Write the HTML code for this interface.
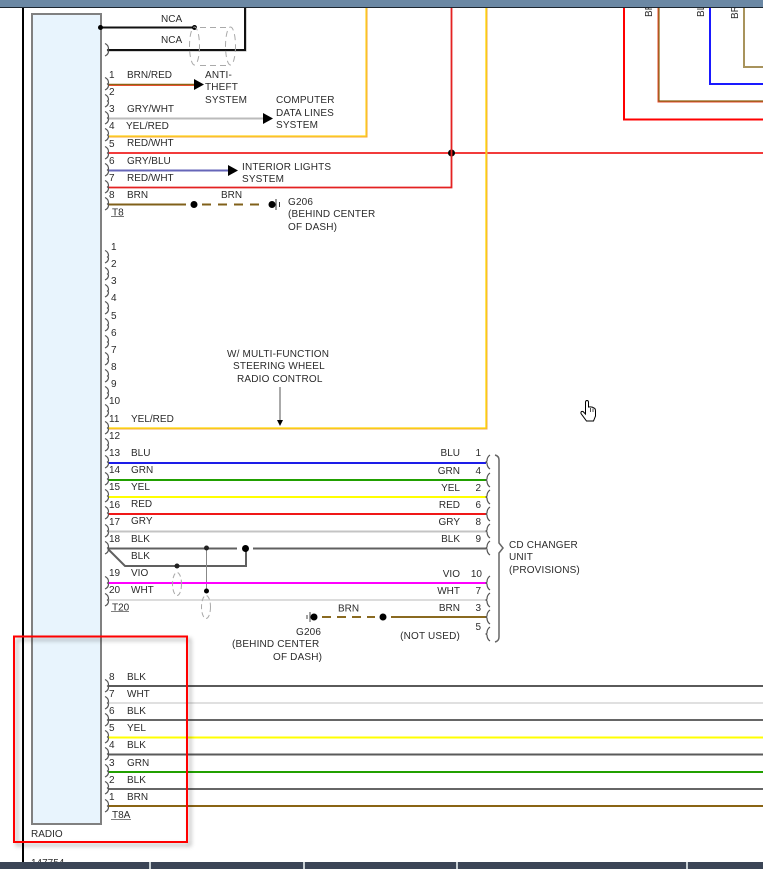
<!DOCTYPE html>
<html><head><meta charset="utf-8"><style>
html,body{margin:0;padding:0;background:#fff;width:763px;height:869px;overflow:hidden}
svg{display:block}
text{font-family:"Liberation Sans",sans-serif;font-size:10px;fill:#2b2b2b}
.n text{letter-spacing:.17px}
</style></head><body>
<svg width="763" height="869" viewBox="0 0 763 869" xmlns="http://www.w3.org/2000/svg">
<defs>
<path id="c" d="M0,-6.500Q3.500,-5 3.500,-1L2.500,0L3.500,1Q3.500,4.500 0,6" fill="none" stroke="#555" stroke-width="1.200"/>
<path id="r" d="M3,-7Q0,-5 0,-1L-1,0L0,1Q0,5 3,7" fill="none" stroke="#555" stroke-width="1.200"/>
<filter id="sh" x="-10%" y="-10%" width="125%" height="125%"><feDropShadow dx="3" dy="3" stdDeviation="2" flood-color="#000" flood-opacity=".35"/></filter>
</defs>

<!-- top-right nested wires -->
<g fill="none" stroke-width="2">
<path d="M624,8V119.500H763" stroke="#f00"/>
<path d="M658.500,8V101.500H763" stroke="#e8492f"/>
<path d="M659,8V101H763" stroke="#8a6414" stroke-width="1.200"/>
<path d="M710,8V84H763" stroke="#1a1aff"/>
<path d="M744,8V67H763" stroke="#a8935c"/>
</g>
<text transform="translate(652,17) rotate(-90)">BR</text>
<text transform="translate(704,17) rotate(-90)">BL</text>
<text transform="translate(738,19) rotate(-90)">BR</text>

<!-- frame -->
<rect x="22" y="8" width="2" height="855" fill="#000"/>
<rect x="32" y="14" width="69" height="810" fill="#e8f4fd" stroke="#808080" stroke-width="2"/>

<!-- upper wires -->
<path d="M100,27.500H194" stroke="#111" stroke-width="2"/>
<path d="M107,50.500H245.500V8" fill="none" stroke="#aaa" stroke-width="2"/>
<path d="M107,50H245V8" fill="none" stroke="#111" stroke-width="2"/>
<circle cx="100.500" cy="27.500" r="2.500" fill="#000"/><circle cx="194.500" cy="27.500" r="2.500" fill="#000"/>
<g fill="none" stroke="#aaa" stroke-width="1" stroke-dasharray="6 4">
<ellipse cx="194.500" cy="46" rx="5" ry="19"/><ellipse cx="230.500" cy="46" rx="5" ry="19"/>
<path d="M200,27.500H230M200,65.500H230"/>
</g>
<path d="M108,84.500H196" stroke="#8a6414" stroke-width="1.600"/><path d="M108,85.500H196" stroke="#e65030" stroke-width="1"/>
<path d="M194,79V90L204,84.500Z" fill="#000"/>
<path d="M108,118.500H263" stroke="#bbb" stroke-width="2"/><path d="M263,113V124L273,118.500Z" fill="#000"/>
<path d="M108,136.500H366.500V8" fill="none" stroke="#f4a73a" stroke-width="2"/><path d="M108,136H366V8" fill="none" stroke="#ffd21e" stroke-width="1.200"/>
<path d="M108,153H763" stroke="#f23b3b" stroke-width="2"/>
<circle cx="451.500" cy="153" r="3.500" fill="#000"/>
<path d="M108,170.500H229" stroke="#6666b8" stroke-width="2"/><path d="M228,165V176L238,170.500Z" fill="#000"/>
<path d="M108,187.500H451.500V8" fill="none" stroke="#e42222" stroke-width="1.800"/>
<path d="M108,204.500H186" stroke="#80601a" stroke-width="2"/>
<circle cx="194" cy="204.500" r="3.500" fill="#000"/>
<path d="M202,204.500H262" stroke="#80601a" stroke-width="2" stroke-dasharray="9 7"/>
<circle cx="272" cy="204.500" r="3.500" fill="#000"/>
<path d="M276,199V210M279.500,202V207" stroke="#333" stroke-width="1"/>

<!-- yellow long -->
<path d="M108,428.500H486.500V8" fill="none" stroke="#f0a850" stroke-width="2"/><path d="M108,428H486V8" fill="none" stroke="#ffd700" stroke-width="1.300"/>
<path d="M280,387V420" stroke="#555" stroke-width="1"/><path d="M277,420H283L280,426Z" fill="#000"/>

<!-- CD wires -->
<path d="M108,463H486" stroke="#1d1de8" stroke-width="2"/>
<path d="M108,480H486" stroke="#21a000" stroke-width="2"/>
<path d="M108,497H486" stroke="#ffff00" stroke-width="2"/>
<path d="M108,514H486" stroke="#f01818" stroke-width="2"/>
<path d="M108,531.500H486" stroke="#c4c4c4" stroke-width="2"/>
<path d="M108,548.500H237M253,548.500H486" stroke="#606060" stroke-width="2"/>
<path d="M108,549L125,566H246V548" fill="none" stroke="#606060" stroke-width="2"/>
<path d="M206.500,548V591" stroke="#888" stroke-width="1"/>
<circle cx="206.500" cy="548" r="2.500" fill="#222"/><circle cx="177" cy="566" r="2.500" fill="#222"/>
<circle cx="206.500" cy="591" r="2.500" fill="#000"/><circle cx="245.500" cy="548.500" r="3.500" fill="#000"/>
<path d="M108,583H486" stroke="#ff00ff" stroke-width="2"/>
<path d="M108,600H486" stroke="#dcdcdc" stroke-width="2"/>
<g fill="none" stroke="#aaa" stroke-width="1" stroke-dasharray="5 3">
<ellipse cx="177" cy="584" rx="4.500" ry="11.500"/><ellipse cx="206" cy="607" rx="4.500" ry="11.500"/>
</g>
<path d="M391,617H486" stroke="#8a6a20" stroke-width="2"/>
<circle cx="383" cy="617" r="3.500" fill="#000"/>
<path d="M322,617H375" stroke="#8a6a20" stroke-width="2" stroke-dasharray="9 6"/>
<circle cx="314" cy="617" r="3.500" fill="#000"/>
<path d="M310,612V622M307,615V619" stroke="#444" stroke-width="1"/>

<!-- bottom wires -->
<path d="M108,686H763" stroke="#5a5a5a" stroke-width="2"/>
<path d="M108,703H763" stroke="#e0e0e0" stroke-width="2"/>
<path d="M108,720H763" stroke="#666" stroke-width="2"/>
<path d="M108,737.500H763" stroke="#ffff00" stroke-width="2"/>
<path d="M108,754.500H763" stroke="#5a5a5a" stroke-width="2"/>
<path d="M108,772H763" stroke="#21a000" stroke-width="2"/>
<path d="M108,789H763" stroke="#666" stroke-width="2"/>
<path d="M108,806H763" stroke="#8a6414" stroke-width="2"/>

<!-- left connectors -->
<use href="#c" x="105" y="50"/><use href="#c" x="105" y="84"/><use href="#c" x="105" y="101"/><use href="#c" x="105" y="118"/><use href="#c" x="105" y="135"/><use href="#c" x="105" y="153"/><use href="#c" x="105" y="170"/><use href="#c" x="105" y="187"/><use href="#c" x="105" y="204"/>
<use href="#c" x="105" y="257"/><use href="#c" x="105" y="274"/><use href="#c" x="105" y="291"/><use href="#c" x="105" y="308"/><use href="#c" x="105" y="325"/><use href="#c" x="105" y="342"/><use href="#c" x="105" y="359"/><use href="#c" x="105" y="376"/><use href="#c" x="105" y="393"/><use href="#c" x="105" y="411"/><use href="#c" x="105" y="428"/>
<use href="#c" x="105" y="445"/><use href="#c" x="105" y="462"/><use href="#c" x="105" y="479"/><use href="#c" x="105" y="496"/><use href="#c" x="105" y="513"/><use href="#c" x="105" y="531"/><use href="#c" x="105" y="548"/><use href="#c" x="105" y="583"/><use href="#c" x="105" y="600"/>
<use href="#c" x="105" y="686"/><use href="#c" x="105" y="703"/><use href="#c" x="105" y="720"/><use href="#c" x="105" y="737"/><use href="#c" x="105" y="754"/><use href="#c" x="105" y="771"/><use href="#c" x="105" y="788"/><use href="#c" x="105" y="806"/>

<!-- right connectors -->
<use href="#r" x="487" y="462"/><use href="#r" x="487" y="480"/><use href="#r" x="487" y="497"/><use href="#r" x="487" y="514"/><use href="#r" x="487" y="531"/><use href="#r" x="487" y="548"/><use href="#r" x="487" y="583"/><use href="#r" x="487" y="600"/><use href="#r" x="487" y="617"/><use href="#r" x="487" y="634"/>
<path d="M495,455Q499,456 499,460V543L503,548L499,553V637Q499,641 495,642" fill="none" stroke="#666" stroke-width="1.500"/>

<!-- upper labels -->
<text x="161" y="22">NCA</text><text x="161" y="43">NCA</text>
<text x="109" y="78">1</text><text x="127" y="78">BRN/RED</text><text x="109" y="95">2</text>
<g class="n"><text x="205" y="78">ANTI-</text><text x="205" y="90">THEFT</text><text x="205" y="103">SYSTEM</text>
<text x="276" y="103">COMPUTER</text><text x="276" y="116">DATA LINES</text><text x="276" y="128">SYSTEM</text>
<text x="242" y="170">INTERIOR LIGHTS</text><text x="242" y="182">SYSTEM</text>
<text x="288" y="205">G206</text><text x="288" y="217">(BEHIND CENTER</text><text x="288" y="230">OF DASH)</text>
<text x="227" y="357">W/ MULTI-FUNCTION</text><text x="233" y="369">STEERING WHEEL</text><text x="237" y="382">RADIO CONTROL</text>
<text x="509" y="548">CD CHANGER</text><text x="509" y="560">UNIT</text><text x="509" y="573">(PROVISIONS)</text>
<text x="296" y="635">G206</text><text x="232" y="647">(BEHIND CENTER</text><text x="273" y="660">OF DASH)</text></g>
<text x="109" y="112">3</text><text x="127" y="112">GRY/WHT</text>
<text x="109" y="129">4</text><text x="126" y="129">YEL/RED</text>
<text x="109" y="147">5</text><text x="127" y="146">RED/WHT</text>
<text x="109" y="164">6</text><text x="127" y="164">GRY/BLU</text>
<text x="109" y="181">7</text><text x="127" y="181">RED/WHT</text>
<text x="109" y="198">8</text><text x="127" y="198">BRN</text><text x="221" y="198">BRN</text>
<text x="112" y="215.500">T8</text><path d="M111,216.500H124" stroke="#555" stroke-width=".8"/>

<!-- middle numbers -->
<text x="111" y="250">1</text><text x="111" y="267">2</text><text x="111" y="284">3</text><text x="111" y="301">4</text><text x="111" y="319">5</text><text x="111" y="336">6</text><text x="111" y="353">7</text><text x="111" y="370">8</text><text x="111" y="387">9</text><text x="109" y="404">10</text><text x="109" y="422">11</text>
<text x="131" y="422">YEL/RED</text>

<text x="109" y="439">12</text>
<text x="109" y="456">13</text><text x="131" y="456">BLU</text>
<text x="109" y="473">14</text><text x="131" y="473">GRN</text>
<text x="109" y="490">15</text><text x="131" y="490">YEL</text>
<text x="109" y="508">16</text><text x="131" y="507">RED</text>
<text x="109" y="525">17</text><text x="131" y="524">GRY</text>
<text x="109" y="542">18</text><text x="131" y="542">BLK</text>
<text x="131" y="559">BLK</text>
<text x="109" y="576">19</text><text x="131" y="576">VIO</text>
<text x="109" y="593">20</text><text x="131" y="593">WHT</text>
<text x="112" y="610.500">T20</text><path d="M111,611.500H129" stroke="#555" stroke-width=".8"/>

<!-- right labels -->
<g text-anchor="end">
<text x="460" y="456">BLU</text><text x="460" y="474">GRN</text><text x="460" y="491">YEL</text><text x="460" y="508">RED</text><text x="460" y="525">GRY</text><text x="460" y="542">BLK</text><text x="460" y="577">VIO</text><text x="460" y="594">WHT</text><text x="460" y="611">BRN</text>
<text x="481" y="456">1</text><text x="481" y="474">4</text><text x="481" y="491">2</text><text x="481" y="508">6</text><text x="481" y="525">8</text><text x="481" y="542">9</text><text x="482" y="577">10</text><text x="481" y="594">7</text><text x="481" y="611">3</text><text x="481" y="630">5</text>
<text x="460" y="639" letter-spacing=".17">(NOT USED)</text>
</g>
<text x="338" y="611.500">BRN</text>

<!-- bottom labels -->
<text x="109" y="680">8</text><text x="127" y="680">BLK</text>
<text x="109" y="697">7</text><text x="127" y="697">WHT</text>
<text x="109" y="714">6</text><text x="127" y="714">BLK</text>
<text x="109" y="731">5</text><text x="127" y="731">YEL</text>
<text x="109" y="748">4</text><text x="127" y="748">BLK</text>
<text x="109" y="766">3</text><text x="127" y="766">GRN</text>
<text x="109" y="783">2</text><text x="127" y="783">BLK</text>
<text x="109" y="800">1</text><text x="127" y="800">BRN</text>
<text x="112" y="818">T8A</text><path d="M111,819.500H131" stroke="#555" stroke-width=".8"/>
<text x="31" y="837">RADIO</text>
<text x="31" y="866">147754</text>

<!-- red highlight -->
<rect x="14" y="636.500" width="173" height="205.500" fill="none" stroke="#f00" stroke-width="2" filter="url(#sh)"/>

<!-- hand cursor -->
<path d="M585.500,409V402.500Q585.500,400.500 587,400.500Q588.500,400.500 588.500,402.500V407Q592,406.500 594,408Q595.500,408.500 595.500,411V416L593.500,421H586.500L581,413.500Q580.500,411 583,411.500L585.500,414Z" fill="#fff" stroke="#000" stroke-width="1"/>
<path d="M590.500,408V412M593,408.500V412" stroke="#000" stroke-width=".7"/>

<!-- top and bottom bars -->
<rect x="0" y="0" width="763" height="7" fill="#6b88a4"/>
<rect x="0" y="7" width="763" height="1" fill="#1c2630"/>
<rect x="0" y="862" width="763" height="7" fill="#3b4556"/>
<rect x="149" y="862" width="2" height="7" fill="#c8d0d4"/>
<rect x="303" y="862" width="2" height="7" fill="#c8d0d4"/>
<rect x="456" y="862" width="2" height="7" fill="#c8d0d4"/>
<rect x="686" y="862" width="2" height="7" fill="#c8d0d4"/>
</svg>
</body></html>
